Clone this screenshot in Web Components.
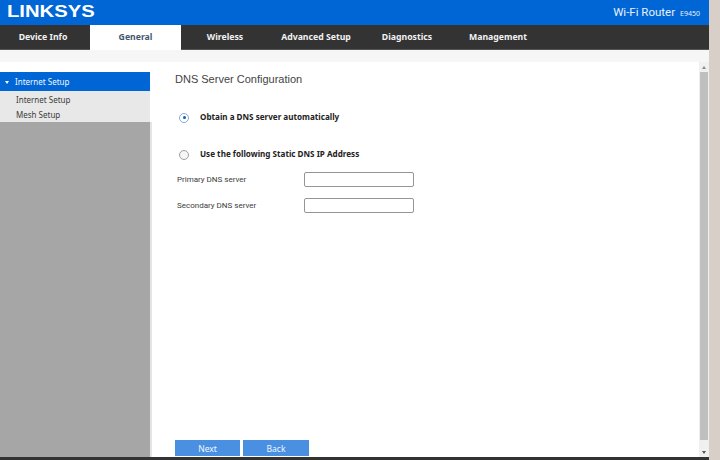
<!DOCTYPE html>
<html>
<head>
<meta charset="utf-8">
<title>Linksys</title>
<style>
  html, body { margin: 0; height: 100%; overflow: hidden; background: #d8d0c8; }
  router-page { width: 720px; height: 460px; }
</style>
</head>
<body>
<router-page>
  <router-header slot="header" model="E9450"></router-header>
  <router-nav slot="nav">
    <nav-tab style="width:86px;padding-right:4px">Device Info</nav-tab>
    <nav-tab style="width:91px" active>General</nav-tab>
    <nav-tab style="width:88px">Wireless</nav-tab>
    <nav-tab style="width:94px">Advanced Setup</nav-tab>
    <nav-tab style="width:88px">Diagnostics</nav-tab>
    <nav-tab style="width:94px">Management</nav-tab>
  </router-nav>
  <side-menu slot="side" title="Internet Setup">
    <span>Internet Setup</span>
    <span>Mesh Setup</span>
  </side-menu>
  <dns-form slot="main"></dns-form>
</router-page>

<script>
// page shell: header, nav, then sidebar + content + scrollbar
class RouterPage extends HTMLElement {
    constructor() {
        super();
        this.attachShadow({ mode: 'open' });
        this.shadowRoot.innerHTML = `
            <style>
                :host { display: flex; flex-direction: column; font-family: "Noto Sans", sans-serif; }
                .top { width: 709px; display: flex; flex-direction: column; flex: none; }
                .band { height: 12px; background: #f6f6f6; flex: none; }
                .body { width: 709px; flex: 1; display: flex; min-height: 0; background: #fff; }
                .foot { width: 709px; height: 3px; background: #333; flex: none; }
            </style>
            <div class="top">
                <slot name="header"></slot>
                <slot name="nav"></slot>
                <div class="band"></div>
            </div>
            <div class="body">
                <slot name="side"></slot>
                <slot name="main"></slot>
                <page-scroll></page-scroll>
            </div>
            <div class="foot"></div>
        `;
    }
}

class RouterHeader extends HTMLElement {
    constructor() {
        super();
        this.attachShadow({ mode: 'open' });
        const model = this.getAttribute('model');
        this.shadowRoot.innerHTML = `
            <style>
                :host { display: flex; justify-content: space-between; align-items: center; height: 25px; background: #0066d6; color: #fff; padding: 0 9px 0 7px; box-sizing: border-box; }
                .logo { font: bold 17px/25px "Liberation Sans", sans-serif; transform: scaleX(1.19); transform-origin: left center; margin-top: -3px; }
                .name { font: 11.5px Roboto, sans-serif; color: #e8f1fb; display: flex; gap: 5px; align-items: baseline; margin-top: -2px; }
                .model { font: 7px "Noto Sans", sans-serif; }
            </style>
            <span class="logo">LINKSYS</span>
            <span class="name">Wi-Fi Router <span class="model">${model}</span></span>
        `;
    }
}

class RouterNav extends HTMLElement {
    constructor() {
        super();
        this.attachShadow({ mode: 'open' });
        this.shadowRoot.innerHTML = `
            <style>
                :host { display: flex; height: 25px; background: #333; border-bottom: 1px solid #555; box-sizing: border-box; }
            </style>
            <slot></slot>
        `;
    }
}

class NavTab extends HTMLElement {
    constructor() {
        super();
        this.attachShadow({ mode: 'open' });
        this.shadowRoot.innerHTML = `
            <style>
                :host { display: flex; align-items: center; justify-content: center; color: #f2f2f2; font: bold 8.7px "Noto Sans", sans-serif; white-space: nowrap; }
                :host([active]) { background: #fff; color: #44586c; margin-bottom: -1px; padding-bottom: 1px; }
            </style>
            <slot></slot>
        `;
    }
}

class SideMenu extends HTMLElement {
    constructor() {
        super();
        this.attachShadow({ mode: 'open' });
        this.shadowRoot.innerHTML = `
            <style>
                :host { display: flex; flex-direction: column; width: 152px; flex: none; padding-top: 10px; box-sizing: border-box; font: 8px "Noto Sans", sans-serif; }
                .head { width: 150px; height: 19px; background: #0066d6; color: #f2f7fd; display: flex; align-items: center; gap: 6px; padding-left: 5px; box-sizing: border-box; }
                .head i { width: 0; height: 0; border: 2.5px solid transparent; border-top: 3px solid #fff; border-bottom: 0; margin-top: 2px; }
                .items { width: 150px; background: #e8e8e8; color: #3c3c3c; padding: 1px 0 0 16px; height: 31px; box-sizing: border-box; display: flex; flex-direction: column; }
                ::slotted(span) { height: 15px; line-height: 15px; }
                .rest { flex: 1; background: #a6a6a6; border-right: 2px solid #e4e4e4; }
            </style>
            <div class="head"><i></i><span>${this.getAttribute('title')}</span></div>
            <div class="items"><slot></slot></div>
            <div class="rest"></div>
        `;
    }
}

class RadioRow extends HTMLElement {
    constructor() {
        super();
        this.attachShadow({ mode: 'open' });
        this.shadowRoot.innerHTML = `
            <style>
                :host { display: flex; align-items: center; height: 14px; font: bold 8.1px "Noto Sans", sans-serif; color: #222; }
                slot { display: block; margin-top: -2px; }
                .dot { width: 10px; height: 10px; box-sizing: border-box; border-radius: 50%; border: 1px solid #a0a0a0; background: #f6f6f6; margin: 1px 11px 0 4px; display: flex; align-items: center; justify-content: center; flex: none; }
                :host([checked]) .dot { border-color: #8fabcb; background: #fff; }
                :host([checked]) .dot::after { content: ""; width: 3px; height: 3px; border-radius: 50%; background: #0a5fc4; }
            </style>
            <span class="dot"></span><slot></slot>
        `;
    }
}

class FieldRow extends HTMLElement {
    constructor() {
        super();
        this.attachShadow({ mode: 'open' });
        this.shadowRoot.innerHTML = `
            <style>
                :host { display: flex; align-items: center; height: 15px; font: 8px Roboto, sans-serif; color: #3c3c3c; }
                label { width: 129px; padding-left: 2px; box-sizing: border-box; flex: none; }
                .box { width: 110px; height: 15px; border: 1px solid #959595; border-radius: 2px; background: #fff; box-sizing: border-box; }
            </style>
            <label><slot></slot></label><div class="box"></div>
        `;
    }
}

class DnsForm extends HTMLElement {
    constructor() {
        super();
        this.attachShadow({ mode: 'open' });
        this.shadowRoot.innerHTML = `
            <style>
                :host { display: flex; flex-direction: column; flex: 1; min-width: 0; padding: 10px 0 1px 23px; box-sizing: border-box; }
                h2 { margin: 0; font: 11px/14px "Liberation Sans", sans-serif; color: #444; }
                .first { margin-top: 24px; }
                .second { margin-top: 23px; }
                .primary { margin-top: 11px; }
                .secondary { margin-top: 11px; }
                .spacer { flex: 1; }
                .actions { display: flex; gap: 3px; }
                button { width: 65px; height: 16px; padding: 0; border: 0; background: #4a90e2; color: #f2f7fd; font: 8.5px "Noto Sans", sans-serif; }
                button + button { width: 66px; }
            </style>
            <h2>DNS Server Configuration</h2>
            <radio-row class="first" checked>Obtain a DNS server automatically</radio-row>
            <radio-row class="second">Use the following Static DNS IP Address</radio-row>
            <field-row class="primary">Primary DNS server</field-row>
            <field-row class="secondary">Secondary DNS server</field-row>
            <div class="spacer"></div>
            <div class="actions"><button>Next</button><button>Back</button></div>
        `;
    }
}

class PageScroll extends HTMLElement {
    constructor() {
        super();
        this.attachShadow({ mode: 'open' });
        this.shadowRoot.innerHTML = `
            <style>
                :host { display: flex; flex-direction: column; width: 10px; flex: none; background: #f0f0f0; }
                .btn { height: 10px; display: flex; align-items: center; justify-content: center; flex: none; }
                .btn i { width: 0; height: 0; border-left: 2.5px solid transparent; border-right: 2.5px solid transparent; }
                .up i { border-bottom: 3px solid #8a8a8a; }
                .down i { border-top: 3px solid #555; }
                .thumb { flex: 1; background: #bfbfbf; margin: 0 1px; }
                .low { height: 7px; flex: none; }
            </style>
            <div class="btn up"><i></i></div>
            <div class="thumb"></div>
            <div class="low"></div>
            <div class="btn down"><i></i></div>
        `;
    }
}

customElements.define('router-page', RouterPage);
customElements.define('router-header', RouterHeader);
customElements.define('router-nav', RouterNav);
customElements.define('nav-tab', NavTab);
customElements.define('side-menu', SideMenu);
customElements.define('radio-row', RadioRow);
customElements.define('field-row', FieldRow);
customElements.define('dns-form', DnsForm);
customElements.define('page-scroll', PageScroll);
</script>
</body>
</html>
